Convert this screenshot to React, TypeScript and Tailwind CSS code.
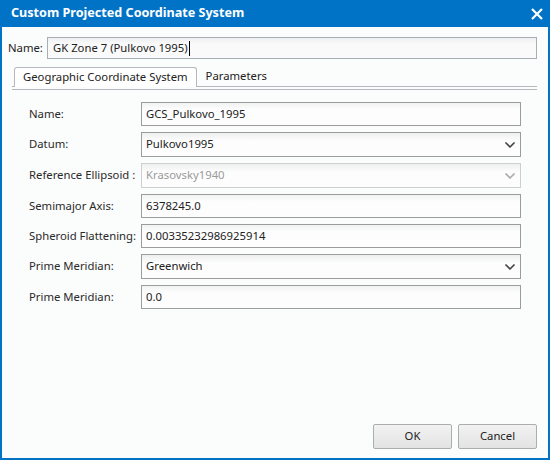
import { ChevronDown } from 'lucide-react';

const font = { fontFamily: '"Noto Sans", "Open Sans", sans-serif' };

function TextField({ value, disabled }: { value: string; disabled?: boolean }) {
  return (
    <div
      className={`flex h-[24px] flex-1 items-center border bg-gradient-to-b from-[#f1f2f2] to-[#fdfdfd] to-[30%] px-[4px] text-[11.3px] ${
        disabled ? 'border-[#cfcfcf] text-[#9a9a9a]' : 'border-[#9c9c9c] text-[#222]'
      }`}
    >
      {value}
    </div>
  );
}

function SelectField({ value, disabled }: { value: string; disabled?: boolean }) {
  return (
    <div
      className={`flex h-[25px] flex-1 items-center justify-between border bg-gradient-to-b from-[#eeefef] to-[#fdfdfd] to-[35%] pl-[4px] pr-[2px] text-[11.3px] ${
        disabled ? 'border-[#cfcfcf] text-[#9a9a9a]' : 'border-[#9c9c9c] text-[#222]'
      }`}
    >
      <span>{value}</span>
      <ChevronDown
        className={`h-[16px] w-[16px] ${disabled ? 'text-[#aaa]' : 'text-[#444]'}`}
        strokeWidth={2.6}
      />
    </div>
  );
}

const rows: { label: string; value: string; kind: 'text' | 'select'; disabled?: boolean }[] = [
  { label: 'Name:', value: 'GCS_Pulkovo_1995', kind: 'text' },
  { label: 'Datum:', value: 'Pulkovo1995', kind: 'select' },
  { label: 'Reference Ellipsoid :', value: 'Krasovsky1940', kind: 'select', disabled: true },
  { label: 'Semimajor Axis:', value: '6378245.0', kind: 'text' },
  { label: 'Spheroid Flattening:', value: '0.00335232986925914', kind: 'text' },
  { label: 'Prime Meridian:', value: 'Greenwich', kind: 'select' },
  { label: 'Prime Meridian:', value: '0.0', kind: 'text' },
];

export default function App() {
  return (
    <div className="flex h-[460px] w-[550px] flex-col border-2 border-t-0 border-[#0173c7] bg-[#fbfcfc]" style={font}>
      <div className="-mx-[2px] flex h-[27px] shrink-0 items-center justify-between bg-[#0173c7] pl-[11px] pr-[7px]">
        <span className="text-[12.6px] font-bold text-white">Custom Projected Coordinate System</span>
        <svg width="12" height="12" viewBox="0 0 12 12">
          <path d="M1 1L11 11M11 1L1 11" stroke="white" strokeWidth="2.2" />
        </svg>
      </div>

      <div className="flex items-center pl-[6px] pr-[11px] pt-[10px] text-[11.3px] text-[#222]">
        <span className="w-[39px] shrink-0 whitespace-nowrap">Name:</span>
        <div className="flex h-[22px] flex-1 items-center border border-[#a6aeb6] bg-gradient-to-b from-[#eeeff0] to-[#fafafa] to-[30%] px-[5px]">
          GK Zone 7 (Pulkovo 1995)
          <span className="ml-[1px] h-[15px] w-[1px] bg-black" />
        </div>
      </div>

      <div className="mt-[8px] ml-[10px] mr-[11px]">
        <div className="flex items-end border-b border-[#b4b9bf] pl-[2px] text-[11.3px] text-[#222]">
          <div className="-mb-px flex h-[20px] items-center rounded-t-[3px] border border-b-0 border-[#b4b9bf] bg-white px-[8px]">
            Geographic Coordinate System
          </div>
          <div className="flex h-[19px] items-center px-[9px]">Parameters</div>
        </div>
        <div className="mt-[2px] h-px bg-[#b4b9bf]" />
      </div>

      <div className="mt-[12px] flex flex-col gap-[6px] pl-[27px] pr-[27px]">
        {rows.map((r, i) => (
          <div key={i} className="flex items-center">
            <span className="w-[112px] shrink-0 whitespace-nowrap text-[11.3px] text-[#2a2a2a]">{r.label}</span>
            {r.kind === 'text' ? (
              <TextField value={r.value} disabled={r.disabled} />
            ) : (
              <SelectField value={r.value} disabled={r.disabled} />
            )}
          </div>
        ))}
      </div>

      <div className="mt-auto flex justify-end gap-[6px] pb-[9px] pr-[11px]">
        <button className="h-[25px] w-[79px] rounded-[2px] border border-[#adadad] bg-gradient-to-b from-[#f2f2f2] to-[#e3e3e3] text-[11.3px] text-[#222]">
          OK
        </button>
        <button className="h-[25px] w-[79px] rounded-[2px] border border-[#adadad] bg-gradient-to-b from-[#f2f2f2] to-[#e3e3e3] text-[11.3px] text-[#222]">
          Cancel
        </button>
      </div>
    </div>
  );
}
